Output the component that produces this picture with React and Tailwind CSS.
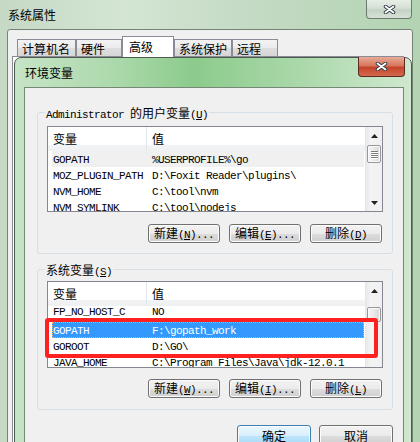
import React from "react";

const MONO = "font-['Liberation_Mono',monospace] text-[11px] tracking-[-0.6px]";

function M({ children }) {
  return <span className={MONO}>{children}</span>;
}

function XGlyph() {
  return (
    <svg width="13" height="9" viewBox="0 0 13 9">
      <path d="M2.5 1.5L10.5 7.5M10.5 1.5L2.5 7.5" stroke="#2f3a44" strokeWidth="3.6" strokeLinecap="round" />
      <path d="M2.5 1.5L10.5 7.5M10.5 1.5L2.5 7.5" stroke="#fff" strokeWidth="1.8" strokeLinecap="round" />
    </svg>
  );
}

function Arrow({ down }) {
  return (
    <svg width="7" height="4" viewBox="0 0 7 4">
      <path d={down ? "M0 0H7L3.5 4Z" : "M0 4H7L3.5 0Z"} fill="#222" />
    </svg>
  );
}

function Tab({ children, active, className = "" }) {
  if (active) {
    return (
      <div className={`h-[21px] -mb-px relative z-10 bg-white border-x border-t border-[#898c95] pl-[6px] pt-[4px] ${className}`}>
        {children}
      </div>
    );
  }
  return (
    <div className={`h-[17px] border-x border-t border-[#898c95] bg-[linear-gradient(#f3f3f3,#ebebeb_50%,#dedede_51%,#d6d6d6)] pl-[4px] pt-[3px] ${className}`}>
      {children}
    </div>
  );
}

function Btn({ children, primary, className = "" }) {
  const look = primary
    ? "border-[#3c7fb1] bg-[linear-gradient(#eaf6fd,#d9f0fc_50%,#bee6fd_51%,#a7d9f5)]"
    : "border-[#707070] bg-[linear-gradient(#f2f2f2,#ebebeb_50%,#dddddd_51%,#cfcfcf)]";
  return (
    <div className={`h-[19px] flex items-center justify-center rounded-[3px] border shadow-[inset_0_0_0_1px_#fcfcfc] ${look} ${className}`}>
      {children}
    </div>
  );
}

function Row({ name, value, sel }) {
  let look = "";
  if (sel === "blue") look = "bg-[#3399ff] text-white outline-1 outline-dotted outline-[#f0b060] -outline-offset-1";
  if (sel === "gray") look = "bg-[#f0f0f0]";
  return (
    <div className={`h-[16px] shrink-0 ml-[4px] mr-px flex items-center whitespace-nowrap ${look}`}>
      <div className="w-[95px] pl-px">
        <M>{name}</M>
      </div>
      <div className="pl-[5px]">
        <M>{value}</M>
      </div>
    </div>
  );
}

function ScrollBar({ thumb, grip, down }) {
  return (
    <div className="w-[17px] shrink-0 flex flex-col items-center border-l border-[#e6e6e6] bg-[linear-gradient(90deg,#e9e9e9,#f3f3f3_30%,#f0f0f0)]">
      <div className="h-[17px] w-full shrink-0 flex items-center justify-center">
        <Arrow />
      </div>
      <div className={`w-[14px] shrink-0 rounded-[2px] border border-[#979797] bg-[linear-gradient(90deg,#f5f5f5,#e9e9e9_50%,#d7d7d7)] shadow-[inset_0_0_0_1px_#fafafa] flex flex-col items-center justify-center gap-[1px] ${thumb}`}>
        {grip &&
          [0, 1, 2, 3].map((i) => (
            <div key={i} className="w-[7px] h-px bg-[#7c7c7c] shadow-[0_1px_0_#ffffff]" />
          ))}
      </div>
      {down && (
        <div className="mt-auto h-[17px] w-full flex items-center justify-center">
          <Arrow down />
        </div>
      )}
    </div>
  );
}

function VarList({ children, scrollbar, className = "" }) {
  return (
    <div className={`w-[336px] border border-[#828790] bg-white flex ${className}`}>
      <div className="flex-1 flex flex-col overflow-hidden">
        <div className="h-[24px] shrink-0 flex bg-[linear-gradient(#ffffff,#ffffff_72%,#f2f3f5_76%,#eef0f2)]">
          <div className="w-[99px] pl-[5px] flex items-center border-r border-[#e2e5ea]">变量</div>
          <div className="pl-[5px] flex items-center">值</div>
        </div>
        {children}
      </div>
      {scrollbar}
    </div>
  );
}

function Group({ label, children, className = "" }) {
  return (
    <div className={`relative w-[356px] border border-[#d5dfe5] rounded-[3px] pl-[9px] ${className}`}>
      <div className="absolute -top-[7px] left-[7px] px-px bg-[#f0f0f0] leading-[13px] whitespace-nowrap">{label}</div>
      {children}
    </div>
  );
}

function BtnLabel({ cn, k, dots }) {
  return (
    <span className="whitespace-nowrap">
      {cn}
      <M>
        (<u>{k}</u>){dots ? "..." : ""}
      </M>
    </span>
  );
}

function EnvDialog() {
  return (
    <div className="absolute left-[14px] top-[57px] w-[398px] h-[400px] rounded-t-[7px] border border-[#4d5a4d] bg-[linear-gradient(90deg,#c6e4c6,#acd9ac_25%,#8ccb8c_45%,#a8d7a8_70%,#cfe8cf)] flex flex-col">
      <div className="h-[29px] shrink-0 flex justify-between">
        <div className="pl-[10px] pt-[9px]">环境变量</div>
        <div className="-mt-px mr-[6px] w-[47px] h-[20px] rounded-b-[4px] border border-t-0 border-[#5b2a20] bg-[linear-gradient(#e8ab98,#d7775d_45%,#c5452b_55%,#d36a4c)] flex items-center justify-center">
          <XGlyph />
        </div>
      </div>
      <div className="ml-[9px] w-[380px] flex-1 border border-[#768876] bg-[#f0f0f0] pl-[12px] pt-[24px]">
        <Group
          className="h-[142px] pt-[13px]"
          label={
            <span>
              <M>Administrator </M>的用户变量
              <M>
                (<u>U</u>)
              </M>
            </span>
          }
        >
          <VarList className="h-[86px]" scrollbar={<ScrollBar thumb="mt-px h-[18px]" grip down />}>
            <Row name="GOPATH" value="%USERPROFILE%\go" sel="gray" />
            <Row name="MOZ_PLUGIN_PATH" value="D:\Foxit Reader\plugins\" />
            <Row name="NVM_HOME" value="C:\tool\nvm" />
            <Row name="NVM_SYMLINK" value="C:\tool\nodejs" />
          </VarList>
          <div className="mt-[12px] flex justify-end gap-[9px] pr-[10px]">
            <Btn className="w-[72px]"><BtnLabel cn="新建" k="N" dots /></Btn>
            <Btn className="w-[72px]"><BtnLabel cn="编辑" k="E" dots /></Btn>
            <Btn className="w-[72px]"><BtnLabel cn="删除" k="D" /></Btn>
          </div>
        </Group>

        <Group
          className="mt-[15px] h-[141px] pt-[11px]"
          label={
            <span>
              系统变量
              <M>
                (<u>S</u>)
              </M>
            </span>
          }
        >
          <div className="relative w-[336px]">
            <VarList className="h-[87px]" scrollbar={<ScrollBar thumb="mt-[8px] h-[15px]" />}>
              <div className="h-[16px] shrink-0 overflow-hidden">
                <div className="-mt-[3px]">
                  <Row name="FP_NO_HOST_C" value="NO" />
                </div>
              </div>
              <Row name="GOPATH" value="F:\gopath_work" sel="blue" />
              <Row name="GOROOT" value="D:\GO\" />
              <Row name="JAVA_HOME" value="C:\Program Files\Java\jdk-12.0.1" />
            </VarList>
            <div className="absolute left-[-2px] top-[37px] w-[333px] h-[40px] border-[4px] border-[#ff2020] rounded-[3px] pointer-events-none" />
          </div>
          <div className="mt-[11px] flex justify-end gap-[9px] pr-[10px]">
            <Btn className="w-[72px]"><BtnLabel cn="新建" k="W" dots /></Btn>
            <Btn className="w-[72px]"><BtnLabel cn="编辑" k="I" dots /></Btn>
            <Btn className="w-[72px]"><BtnLabel cn="删除" k="L" /></Btn>
          </div>
        </Group>

        <div className="mt-[15px] w-[356px] flex justify-end gap-[8px]">
          <Btn primary className="w-[74px] h-[21px]">确定</Btn>
          <Btn className="w-[74px] h-[21px]">取消</Btn>
        </div>
      </div>
    </div>
  );
}

export default function App() {
  return (
    <div className="relative w-[420px] h-[442px] overflow-hidden bg-[linear-gradient(90deg,#c5d9c5,#d4e5d4_30%,#c4dac4_60%,#b2d4b2)] font-['Noto_Sans_CJK_SC','Liberation_Sans',sans-serif] text-[12px] leading-none text-black">
      <div className="h-[29px] flex justify-between">
        <div className="pl-[8px] pt-[9px]">系统属性</div>
        <div className="mr-[8px] w-[46px] h-[19px] rounded-b-[4px] border border-t-0 border-[#6d7a6d] bg-[linear-gradient(#e6eee6,#d5e0d5_45%,#c4d2c4_55%,#d6e2d6)] flex items-center justify-center">
          <XGlyph />
        </div>
      </div>
      <div className="mx-[7px] h-[420px] rounded-t-[3px] border border-[#748474] bg-[#f0f0f0] pt-[6px]">
        <div className="h-[20px] flex items-end pl-[9px]">
          <Tab className="w-[59px]">计算机名</Tab>
          <Tab className="w-[46px]">硬件</Tab>
          <Tab active className="w-[52px]">高级</Tab>
          <Tab className="w-[58px]">系统保护</Tab>
          <Tab className="w-[46px]">远程</Tab>
        </div>
        <div className="ml-[4px] mr-[8px] h-[390px] border border-[#898c95] bg-white" />
      </div>
      <EnvDialog />
    </div>
  );
}
